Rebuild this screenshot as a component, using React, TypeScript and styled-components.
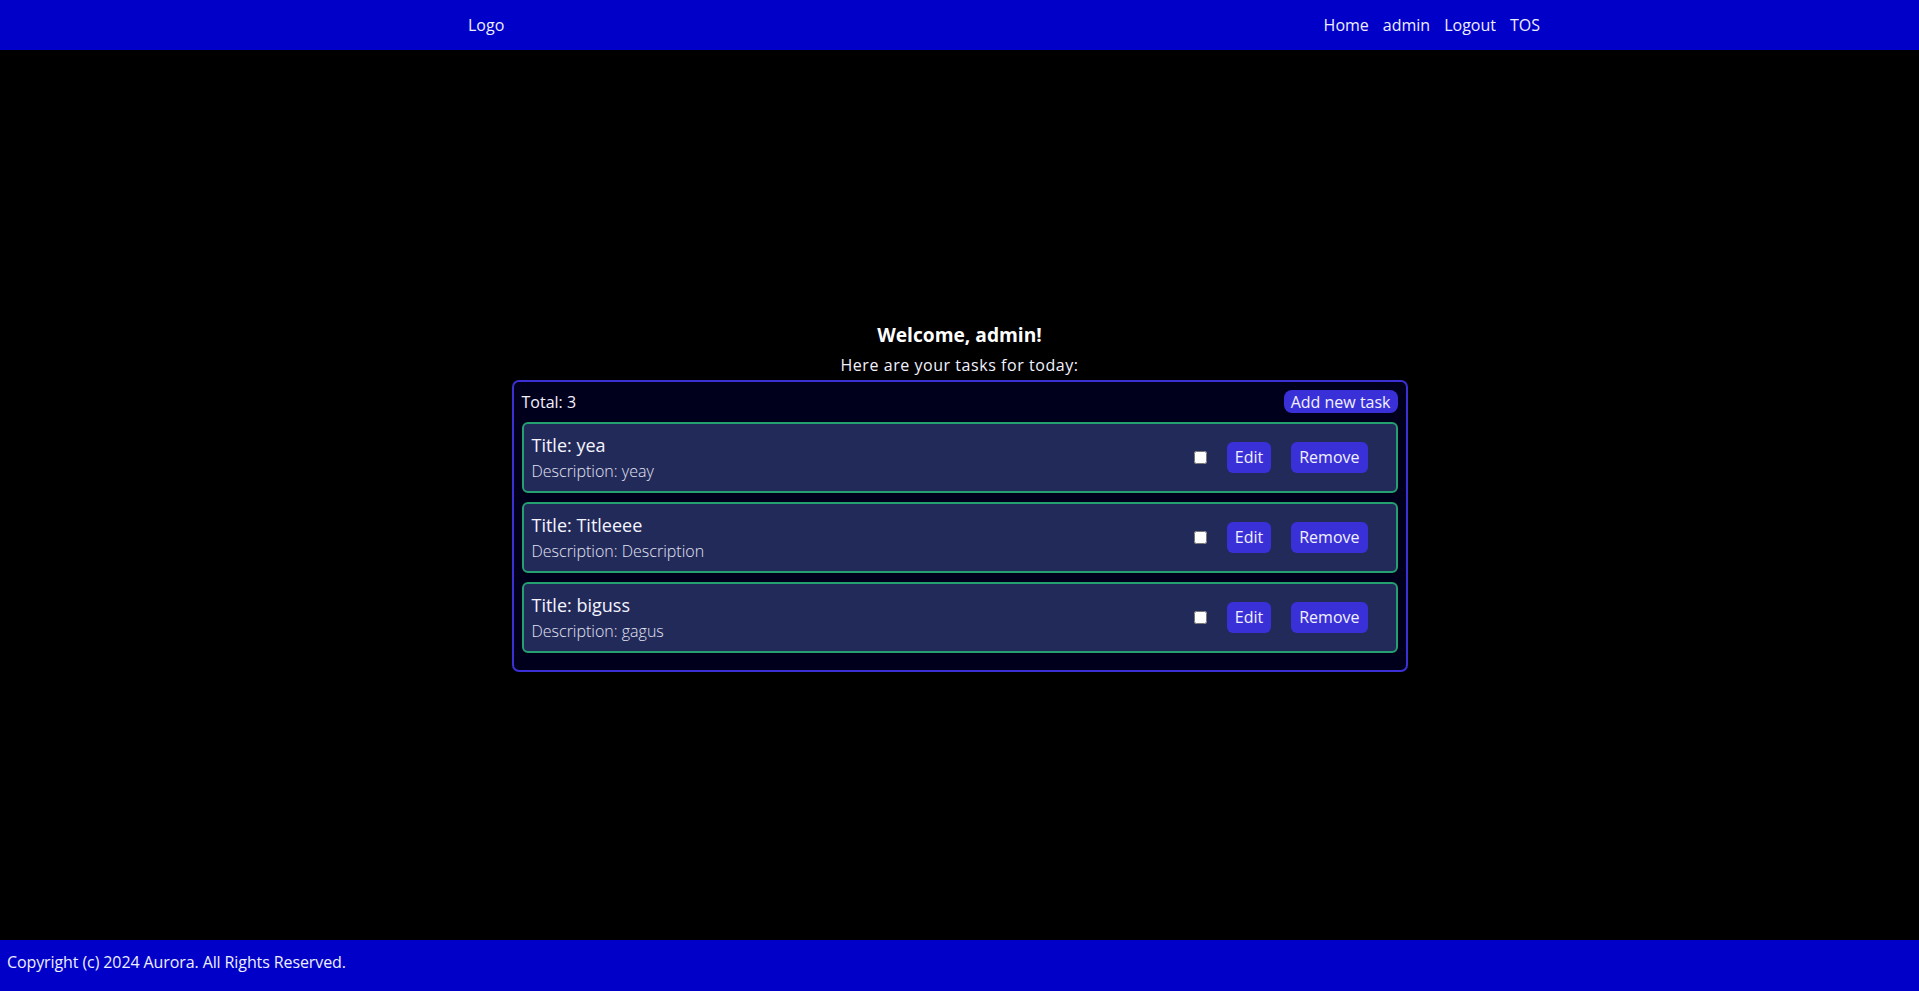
import React from "react";
import styled, { createGlobalStyle } from "styled-components";

const GlobalStyle = createGlobalStyle`
  html, body {
    margin: 0;
    padding: 0;
    background: #000;
  }
  body {
    font-family: "Open Sans", "Noto Sans", sans-serif;
    color: #f2f2ff;
  }
  * { box-sizing: border-box; }
`;

const Page = styled.div`
  min-height: 100vh;
  display: flex;
  flex-direction: column;
`;

const Header = styled.header`
  height: 50px;
  flex: 0 0 50px;
  background: #0000c8;
  display: flex;
  align-items: center;
  justify-content: space-between;
  padding: 0 379px 0 468px;
  font-size: 16px;
`;

const Logo = styled.div`
  color: #eeeeff;
`;

const Nav = styled.nav`
  display: flex;
  gap: 14px;
`;

const NavLink = styled.a`
  color: #eeeeff;
  text-decoration: none;
  cursor: pointer;
`;

const Main = styled.main`
  flex: 1;
  display: flex;
  flex-direction: column;
  align-items: center;
  justify-content: center;
  padding-top: 2px;
`;

const Welcome = styled.h3`
  margin: 0;
  font-size: 19.2px;
  line-height: 29px;
  font-weight: 700;
  color: #ffffff;
`;

const Subtitle = styled.p`
  margin: 4px 0 3px;
  font-size: 16px;
  line-height: 24px;
  letter-spacing: 0.55px;
  color: #f2f2ff;
`;

const TaskBox = styled.section`
  width: 896px;
  border: 2px solid #3a30d4;
  border-radius: 7px;
  background: #00001c;
  padding: 8px;
`;

const TaskBoxHeader = styled.div`
  display: flex;
  justify-content: space-between;
  align-items: center;
  margin-bottom: 9px;
  font-size: 16px;
`;

const Total = styled.span`
  color: #f2f2ff;
`;

const PillButton = styled.button`
  font-family: inherit;
  font-size: 16px;
  line-height: 22px;
  height: 23px;
  padding: 0 7px;
  border: none;
  border-radius: 8px;
  background: #3a30d8;
  color: #f2f2ff;
  cursor: pointer;
`;

const TaskCard = styled.article`
  display: flex;
  align-items: center;
  border: 2px solid #25a070;
  border-radius: 6px;
  background: #222a5a;
  padding: 8px;
  margin-bottom: 9px;
`;

const TaskInfo = styled.div`
  flex: 1;
  display: flex;
  flex-direction: column;
`;

const TaskTitle = styled.div`
  font-size: 18px;
  line-height: 27px;
  color: #f4f4ff;
`;

const TaskDesc = styled.div`
  font-size: 16px;
  line-height: 24px;
  font-weight: 300;
  color: #e2e4f2;
`;

const Actions = styled.div`
  display: flex;
  align-items: center;
  gap: 20px;
  padding-right: 20px;
`;

const Check = styled.input`
  margin: 0;
  width: 13px;
  height: 13px;
`;

const ActionButton = styled.button`
  font-family: inherit;
  font-size: 16px;
  line-height: 31px;
  height: 31px;
  padding: 0 8px;
  border: none;
  border-radius: 6px;
  background: #3a30d8;
  color: #f2f2ff;
  cursor: pointer;
`;

const Footer = styled.footer`
  height: 51px;
  flex: 0 0 51px;
  background: #0000c8;
  display: flex;
  align-items: center;
  padding: 0 0 7px 7px;
  font-size: 16px;
  letter-spacing: -0.1px;
  color: #eeeeff;
`;

const tasks = [
  { title: "yea", description: "yeay" },
  { title: "Titleeee", description: "Description" },
  { title: "biguss", description: "gagus" },
];

export default function App() {
  return (
    <Page>
      <GlobalStyle />
      <Header>
        <Logo>Logo</Logo>
        <Nav>
          <NavLink>Home</NavLink>
          <NavLink>admin</NavLink>
          <NavLink>Logout</NavLink>
          <NavLink>TOS</NavLink>
        </Nav>
      </Header>
      <Main>
        <Welcome>Welcome, admin!</Welcome>
        <Subtitle>Here are your tasks for today:</Subtitle>
        <TaskBox>
          <TaskBoxHeader>
            <Total>Total: {tasks.length}</Total>
            <PillButton>Add new task</PillButton>
          </TaskBoxHeader>
          {tasks.map((t) => (
            <TaskCard key={t.title}>
              <TaskInfo>
                <TaskTitle>Title: {t.title}</TaskTitle>
                <TaskDesc>Description: {t.description}</TaskDesc>
              </TaskInfo>
              <Actions>
                <Check type="checkbox" />
                <ActionButton>Edit</ActionButton>
                <ActionButton>Remove</ActionButton>
              </Actions>
            </TaskCard>
          ))}
        </TaskBox>
      </Main>
      <Footer>Copyright (c) 2024 Aurora. All Rights Reserved.</Footer>
    </Page>
  );
}
